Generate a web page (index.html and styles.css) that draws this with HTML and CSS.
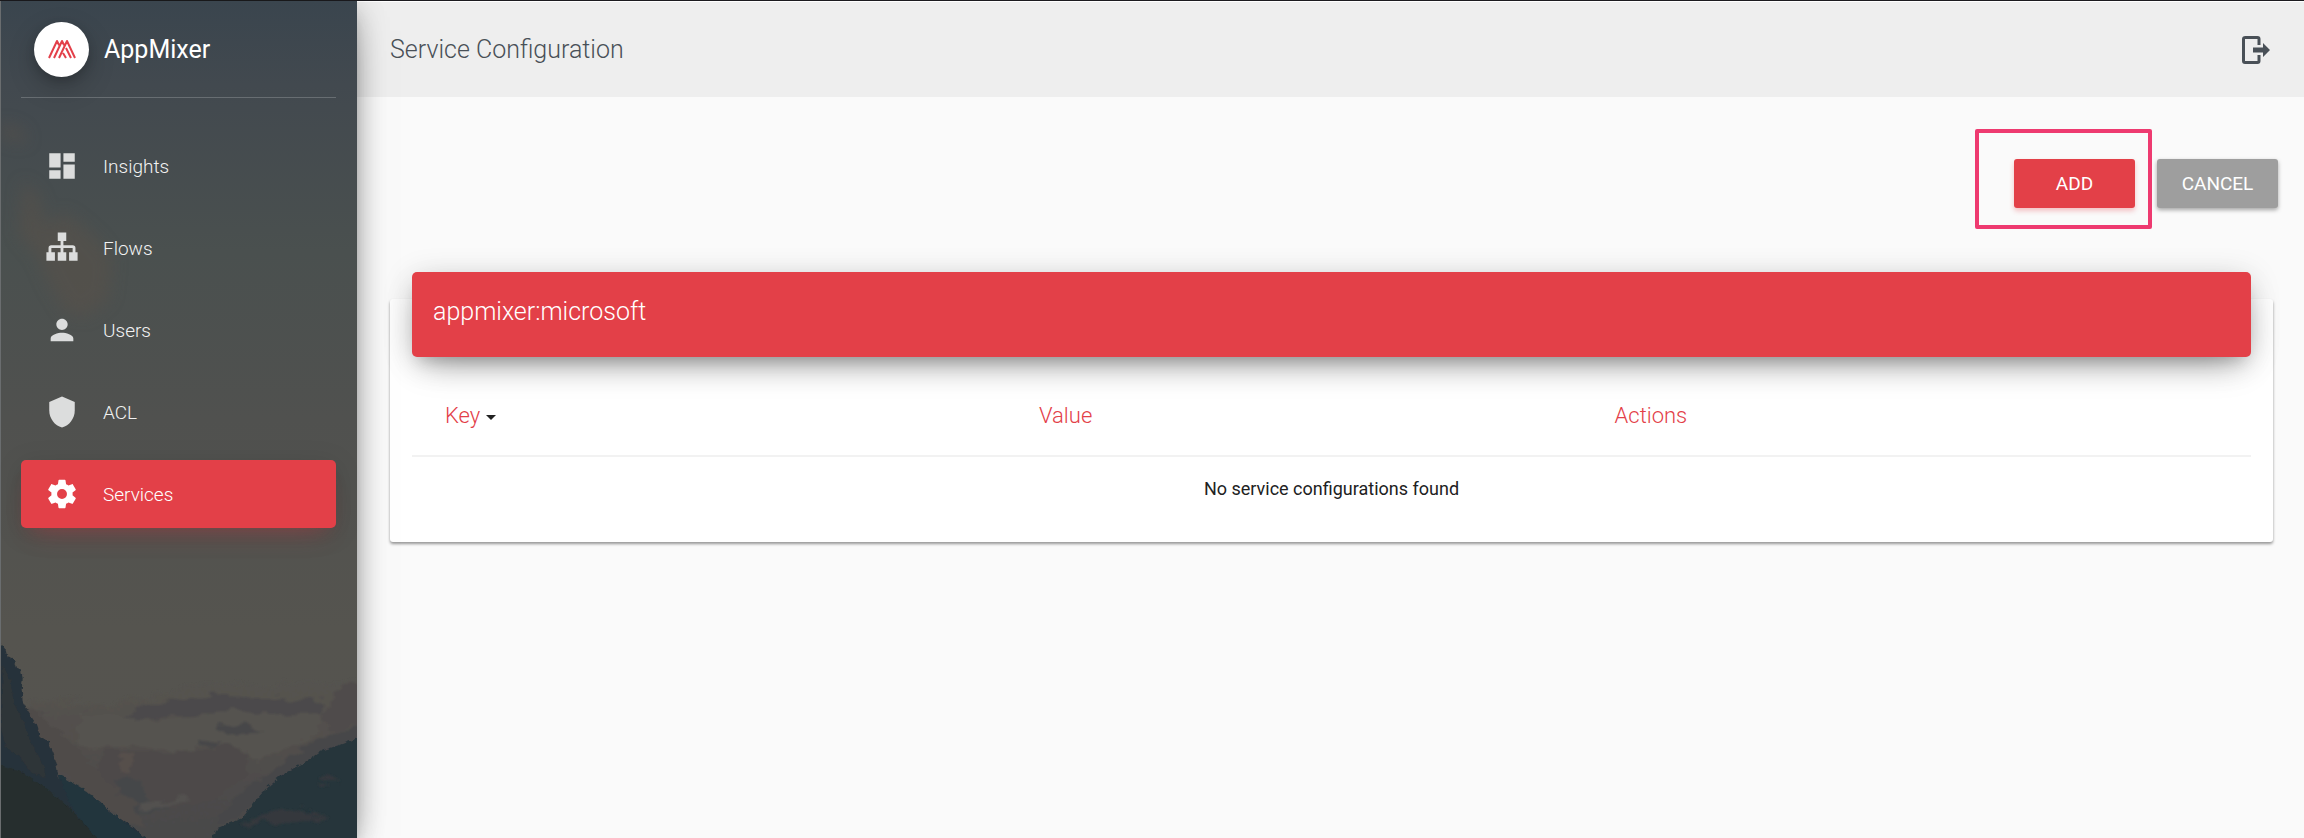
FILE: index.html
```html
<!DOCTYPE html>
<html lang="en">
<head>
  <meta charset="utf-8">
  <meta name="viewport" content="width=device-width, initial-scale=1">
  <title>AppMixer - Service Configuration</title>
  <link rel="stylesheet" href="styles.css">
</head>
<body>
<div class="wrapper">

  <aside class="sidebar">
    <!-- background landscape -->
    <svg class="sidebar-bg" viewBox="0 0 357 838" preserveAspectRatio="xMidYMax slice" aria-hidden="true">
      <defs>
        <linearGradient id="sky" x1="0" y1="0" x2="0" y2="1">
          <stop offset="0" stop-color="#3a454e"/>
          <stop offset=".1" stop-color="#42494f"/>
          <stop offset=".3" stop-color="#4a504f"/>
          <stop offset=".5" stop-color="#50514f"/>
          <stop offset=".75" stop-color="#55544f"/>
          <stop offset="1" stop-color="#55534f"/>
        </linearGradient>
        <linearGradient id="rock" x1="0" y1="0" x2="0" y2="1">
          <stop offset="0" stop-color="#55534f"/>
          <stop offset=".5" stop-color="#504d4b"/>
          <stop offset="1" stop-color="#47474a"/>
        </linearGradient>
        <filter id="soft" x="-10%" y="-10%" width="120%" height="120%">
          <feTurbulence type="fractalNoise" baseFrequency=".05 .12" numOctaves="3" seed="4" result="n"/>
          <feDisplacementMap in="SourceGraphic" in2="n" scale="16" xChannelSelector="R" yChannelSelector="G"/>
          <feGaussianBlur stdDeviation="1"/>
        </filter>
        <filter id="rough" x="-10%" y="-10%" width="120%" height="120%">
          <feTurbulence type="fractalNoise" baseFrequency=".2" numOctaves="2" seed="2" result="n"/>
          <feDisplacementMap in="SourceGraphic" in2="n" scale="5" xChannelSelector="R" yChannelSelector="G"/>
        </filter>
        <filter id="cloud" x="-50%" y="-50%" width="200%" height="200%"><feGaussianBlur stdDeviation="8"/></filter>
      </defs>
      <rect width="357" height="838" fill="url(#sky)"/>
      <g fill="#5a514a" opacity=".5" filter="url(#cloud)">
        <path d="M22 180l16 14 6 30 20-12 14 10 18 16 16 20-4 40-22 18-20-4-16-26-14-32-18-20z"/>
        <path d="M0 122l20 6 8 12-10 2-18-6z"/>
      </g>
      <g filter="url(#soft)">
        <path d="M20 704l36-6 34 4 46-2 30-8 32-8 60 0 60-2 60 0v170H20z" fill="url(#rock)"/>
        <path d="M138 706l60-9 16-2 60 4 48 2v13l-30-1-24 3-28-4-26 2-42 2-30 4-20-3z" fill="#4b4a4b"/>
        <path d="M80 712l44 4 28 6 60-8 8-4 40 4 36-1 24 2-3 20-60 26-10-10-36-6-28 6-56-4-50-2z" fill="#55534f"/>
        <path d="M214 724l26 1 23 6-22 4-22-3z" fill="#474749"/>
        <path d="M196 740l26 1-8 6-10-1z" fill="#464649"/>
        <path d="M104 750l60 2 40-2 24-4 20 6-4 24-30 24-46 10-50-12-22-26z" fill="#4d494a"/>
        <path d="M120 754l10 2-3 16-8-6z" fill="#56504c"/>
        <path d="M116 778l24 4 8 20 26 8-40 4-18-14z" fill="#44464a"/>
        <path d="M140 804l40-7 10 2-24 8-28 3z" fill="#53514f"/>
        <path d="M22 700l22 20 30 24 30 34 30 26 12 26-30-10-66-60-28-40z" fill="#4f4b4a"/>
        <path d="M370 684l-31 2-14 24-6 14 18 6 33-12z" fill="#504c4b"/>
        <path d="M260 780l50-38 60-20v30l-73 20-50 40-34 14 10-20z" fill="#46474a"/>
      </g>
      <!-- slopes in front -->
      <g filter="url(#rough)">
        <path d="M-5 643h5l5 6 2 8 6 2 2 8 5 2 2 9-1 12 1 11 5 10 8 12 4 13 8 5 5 12 4 14 2 11 18 12 30 20 28 18 20 20H-5z" fill="#27323a"/>
        <path d="M2 665l8 14 3 24 10 18 8 24 12 20 2 12-14-4-12-16-14-10-5-20z" fill="#2e3439"/>
        <path d="M57 774l30 18 26 22 40 30H98L70 806z" fill="#24343d"/>
        <path d="M-5 763l27 10 25 16 26 23 28 32H-5z" fill="#252d2d"/>
        <path d="M365 735l-26 10-18 6-18 12-22 12-14 12-13 15-12 16-25 10-9 16H365z" fill="#26343b"/>
      </g>
      <path d="M325 778l16 2-3 3-20-1zM254 817l20-8 14 4 14-4 8 6 16 2-12 5-20-2-18 4-16-4-12 6-8-2z" fill="#36393d" filter="url(#soft)"/>
    </svg>

    <a class="brand" href="#">
      <span class="brand-logo">
        <svg viewBox="0 0 28 20" width="28" height="20" aria-hidden="true">
          <path d="M1 19L9 2l2 4M6 19l8-17 2 4M11 19l8-17 8 17M18 9l5 10M15 14l3 5" fill="none" stroke="#e3404a" stroke-width="2" stroke-linejoin="round"/>
        </svg>
      </span>
      <span class="brand-name">AppMixer</span>
    </a>

    <nav class="menu">
      <a class="menu-item" href="#">
        <svg class="menu-icon" viewBox="0 0 24 24" aria-hidden="true"><path d="M3 13h8V3H3v10zm0 8h8v-6H3v6zm10 0h8V11h-8v10zm0-18v6h8V3h-8z"/></svg>
        <span>Insights</span>
      </a>
      <a class="menu-item" href="#">
        <svg class="menu-icon" viewBox="0 0 24 24" aria-hidden="true"><path d="M9 1h6v6h-2v3h6.500q2 0 2 2v3H23v6h-6v-6h2.500v-3H13v3h2v6H9v-6h2v-3H4.500v3H7v6H1v-6h1.500v-3q0-2 2-2H11V7H9z"/></svg>
        <span>Flows</span>
      </a>
      <a class="menu-item" href="#">
        <svg class="menu-icon" viewBox="0 0 24 24" aria-hidden="true"><path d="M12 12c2.210 0 4-1.790 4-4s-1.790-4-4-4-4 1.790-4 4 1.790 4 4 4zm0 2c-2.670 0-8 1.340-8 4v2h16v-2c0-2.660-5.330-4-8-4z"/></svg>
        <span>Users</span>
      </a>
      <a class="menu-item" href="#">
        <svg class="menu-icon" viewBox="0 0 24 24" aria-hidden="true"><path d="M12 1L3 5v6c0 5.550 3.840 10.740 9 12 5.160-1.260 9-6.450 9-12V5l-9-4z"/></svg>
        <span>ACL</span>
      </a>
      <a class="menu-item active" href="#">
        <svg class="menu-icon" viewBox="0 0 24 24" aria-hidden="true"><path d="M12 15.500A3.500 3.500 0 0 1 8.500 12 3.500 3.500 0 0 1 12 8.500a3.500 3.500 0 0 1 3.500 3.500 3.500 3.500 0 0 1-3.500 3.500m7.430-2.530c.04-.32.07-.64.07-.97s-.03-.66-.07-1l2.110-1.630c.19-.15.240-.42.120-.64l-2-3.460c-.12-.22-.39-.31-.61-.22l-2.490 1c-.52-.39-1.060-.73-1.690-.98l-.37-2.650A.506.506 0 0 0 14 2h-4c-.25 0-.46.180-.5.420l-.37 2.650c-.63.250-1.170.590-1.690.980l-2.490-1c-.22-.09-.49 0-.61.220l-2 3.460c-.13.220-.07.490.120.640L4.570 11c-.04.340-.07.670-.07 1s.03.650.070.970l-2.110 1.660c-.19.150-.25.420-.12.640l2 3.460c.120.220.390.300.610.220l2.490-1.010c.52.400 1.060.740 1.690.990l.370 2.650c.04.240.250.420.500.420h4c.25 0 .46-.18.500-.42l.370-2.650c.63-.26 1.170-.59 1.690-.99l2.490 1.010c.22.080.490 0 .61-.22l2-3.460c.12-.22.070-.49-.12-.64z"/></svg>
        <span>Services</span>
      </a>
    </nav>
  </aside>

  <div class="main-panel">
    <header class="topbar">
      <h1>Service Configuration</h1>
      <button class="logout" type="button" aria-label="Log out">
        <svg viewBox="0 0 28 28" width="28" height="28" aria-hidden="true">
          <path d="M17 9V3q0-1.500-1.500-1.500h-12Q1.500 1.500 1.500 3v22q0 1.500 1.500 1.500h12.500q1.500 0 1.500-1.500v-6" fill="none" stroke="#495057" stroke-width="3"/>
          <path d="M11 11.500h10V7l7 7-7 7v-4.500H11z" fill="#495057"/>
        </svg>
      </button>
    </header>

    <main class="content">
      <div class="actions">
        <div class="marked">
          <button class="btn btn-primary" type="button">ADD</button>
        </div>
        <button class="btn btn-cancel" type="button">CANCEL</button>
      </div>

      <section class="card">
        <div class="card-header">
          <h2>appmixer:microsoft</h2>
        </div>
        <table class="config-table">
          <colgroup>
            <col class="col-key">
            <col class="col-value">
            <col>
          </colgroup>
          <thead>
            <tr>
              <th scope="col">Key<span class="caret"></span></th>
              <th scope="col">Value</th>
              <th scope="col">Actions</th>
            </tr>
          </thead>
          <tbody>
            <tr>
              <td colspan="3">No service configurations found</td>
            </tr>
          </tbody>
        </table>
      </section>
    </main>
  </div>

</div>
</body>
</html>
```
FILE: styles.css
```css
* { box-sizing: border-box; margin: 0; padding: 0; }

body {
  font-family: Roboto, "Liberation Sans", sans-serif;
  font-weight: 300;
  background: #fafafa;
}

a { color: inherit; text-decoration: none; }
button { font-family: inherit; border: 0; cursor: pointer; }

.wrapper {
  display: flex;
  min-height: 100vh;
  border-top: 1px solid #1c1b1f;
}

/* sidebar */
.sidebar {
  position: relative;
  z-index: 2;
  flex: 0 0 357px;
  padding: 0 21px 0 20px;
  color: #fff;
  background: #4a504f;
  border-left: 1px solid #6a6d6f;
  box-shadow: 0 14px 40px -16px rgba(0, 0, 0, .56), 0 5px 28px rgba(0, 0, 0, .2), 0 10px 14px -6px rgba(0, 0, 0, .2);
}
.sidebar-bg {
  position: absolute;
  top: 0;
  left: 0;
  width: 100%;
  height: 100%;
}

.brand {
  position: relative;
  display: flex;
  align-items: center;
  gap: 15px;
  height: 97px;
  padding-left: 13px;
  border-bottom: 1px solid rgba(255, 255, 255, .2);
}
.brand-logo {
  display: flex;
  align-items: center;
  justify-content: center;
  width: 55px;
  height: 55px;
  border-radius: 50%;
  background: #fff;
  box-shadow: 0 10px 28px rgba(0, 0, 0, .2), 0 4px 10px rgba(0, 0, 0, .15);
}
.brand-name {
  font-size: 25px;
  font-weight: 400;
}

.menu {
  position: relative;
  display: flex;
  flex-direction: column;
  gap: 14px;
  margin-top: 34px;
}
.menu-item {
  display: flex;
  align-items: center;
  gap: 24px;
  height: 68px;
  padding-left: 24px;
  border-radius: 5px;
  font-size: 19px;
  color: #f2f2f2;
}
.menu-icon {
  width: 34px;
  height: 34px;
  fill: #dcdddd;
}
.menu-item.active {
  color: #fff;
  background: #e34048;
  box-shadow: 0 16px 28px -14px rgba(227, 64, 72, .3), 0 5px 28px rgba(0, 0, 0, .12), 0 10px 14px -7px rgba(227, 64, 72, .15);
}
.active .menu-icon { fill: #fff; }

/* right side */
.main-panel {
  flex: 1;
  min-width: 0;
}
.topbar {
  display: flex;
  align-items: center;
  justify-content: space-between;
  height: 96px;
  padding: 0 34px 0 33px;
  background: #eee;
  border-top: 1px solid #fff;
}
.topbar h1 {
  font-size: 25px;
  line-height: 32px;
  font-weight: 300;
  color: #495057;
}
.logout {
  display: flex;
  background: none;
}

.content { padding: 32px 31px 40px 33px; }

.actions {
  display: flex;
  align-items: flex-start;
  justify-content: flex-end;
  gap: 5px;
  margin-right: -5px;
}
/* frame round the primary action */
.marked {
  padding: 26px 13px 17px 35px;
  border: 4px solid #ee3a70;
  border-radius: 2px;
}
.btn {
  display: block;
  width: 121px;
  height: 49px;
  border-radius: 3px;
  font-size: 19px;
  font-weight: 400;
  color: #fff;
}
.btn-primary {
  background: #e34048;
  box-shadow: 0 3px 5px rgba(227, 64, 72, .3);
}
.btn-cancel {
  margin-top: 30px;
  background: #9e9e9e;
  box-shadow: 0 2px 4px rgba(0, 0, 0, .35);
}

.card {
  margin-top: 70px;
  padding: 0 22px 22px;
  background: #fff;
  border-radius: 3px;
  box-shadow: 0 2px 3px rgba(0, 0, 0, .4);
}
.card-header {
  position: relative;
  top: -27px;
  height: 85px;
  margin-bottom: -28px;
  padding: 24px 21px;
  border-radius: 5px;
  background: #e34048;
  box-shadow: 0 14px 36px -12px rgba(0, 0, 0, .4), 0 5px 32px rgba(0, 0, 0, .14), 0 10px 14px -7px rgba(0, 0, 0, .15);
}
.card-header h2 {
  font-size: 25px;
  line-height: 32px;
  font-weight: 300;
  color: #fff;
}

.config-table {
  width: 100%;
  table-layout: fixed;
  border-collapse: collapse;
}
.col-key { width: 32.3%; }
.col-value { width: 31.3%; }
.config-table th {
  height: 100px;
  padding: 20px 33px 0;
  border-bottom: 2px solid #f2f2f2;
  font-size: 22px;
  font-weight: 300;
  text-align: left;
  color: #e34048;
}
.config-table td {
  height: 64px;
  font-size: 18px;
  font-weight: 400;
  text-align: center;
  color: #212121;
}
.caret {
  display: inline-block;
  margin-left: 6px;
  vertical-align: middle;
  border: 5px solid transparent;
  border-top-color: #212121;
  border-bottom: 0;
}
```
